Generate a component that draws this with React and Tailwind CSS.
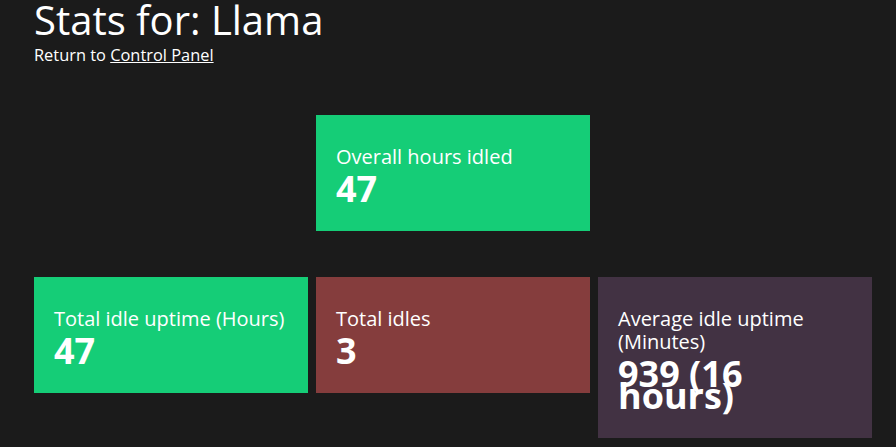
import React from "react";

const Card = ({ label, value, color }) => (
  <div className={`${color} px-5 pt-[30px] pb-[31px] text-white`}>
    <p className="text-[20px] leading-[23px] mb-[10px]">{label}</p>
    <p className="text-[36px] font-bold leading-[22px]">{value}</p>
  </div>
);

export default function App() {
  return (
    <div className="min-h-screen bg-[#1b1b1b] text-white px-[34px] font-['Open_Sans',sans-serif]">
      <h1 className="text-[40px] leading-[40px]">Stats for: Llama</h1>
      <p className="text-[16.4px] leading-[24px] mt-[3px]">
        Return to <a href="#" className="underline">Control Panel</a>
      </p>
      <div className="w-[838px] mt-[48px] grid grid-cols-3 gap-x-2 gap-y-[46px] items-start">
        <div className="col-start-2">
          <Card label="Overall hours idled" value="47" color="bg-[#15cd77]" />
        </div>
        <div className="col-start-1">
          <Card label="Total idle uptime (Hours)" value="47" color="bg-[#15cd77]" />
        </div>
        <Card label="Total idles" value="3" color="bg-[#853d3d]" />
        <Card label="Average idle uptime (Minutes)" value="939 (16 hours)" color="bg-[#423243]" />
      </div>
    </div>
  );
}
